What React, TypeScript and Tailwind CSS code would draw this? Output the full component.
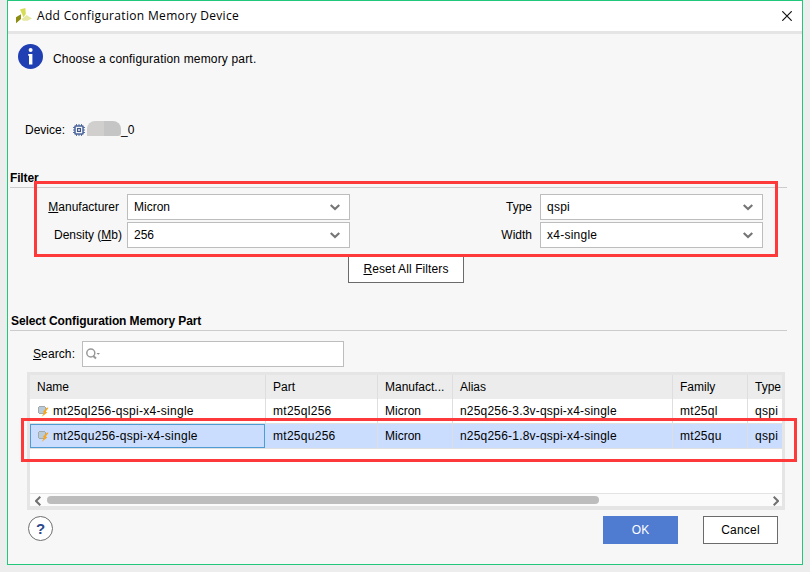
import React from 'react';

interface PartRow {
  name: string;
  part: string;
  alias: string;
  family: string;
  selected: boolean;
}

const ROWS: PartRow[] = [
  { name: 'mt25ql256-qspi-x4-single', part: 'mt25ql256', alias: 'n25q256-3.3v-qspi-x4-single', family: 'mt25ql', selected: false },
  { name: 'mt25qu256-qspi-x4-single', part: 'mt25qu256', alias: 'n25q256-1.8v-qspi-x4-single', family: 'mt25qu', selected: true },
];

const COLS = 'grid grid-cols-[236px_112px_75px_220px_75px_34px]';

const Logo = () => (
  <svg className="h-[16px] w-[16px] shrink-0" viewBox="0 0 16 16">
    <path d="M4 1.5 L9.3 0 L9.8 6 L7.5 9.3 L5.8 5.5 Z" fill="#d6dc55" />
    <path d="M0 9.3 L5 6.3 L5 11 L0 15.2 Z" fill="#8c8d12" />
    <path d="M5.5 11 L8 9.3 L10.5 7 L16 10.5 L11.5 12.8 L7 12.8 Z" fill="#e4e8a0" />
  </svg>
);

const ChipIcon = () => (
  <svg className="h-[12px] w-[12px] shrink-0" viewBox="0 0 12 12">
    <path d="M3.5 0v12M6 0v12M8.5 0v12M0 3.5h12M0 6h12M0 8.5h12" stroke="#5a71a0" strokeWidth="1" />
    <rect x="2" y="2" width="8" height="8" rx="0.5" fill="#f2f4f8" stroke="#4a639a" strokeWidth="1.5" />
    <rect x="4.5" y="4.5" width="3" height="3" fill="#c3cbdc" stroke="#3d588f" strokeWidth="1" />
  </svg>
);

const FlashIcon = () => (
  <svg className="h-[12px] w-[12px] shrink-0" viewBox="0 0 12 12">
    <path d="M2 1h6v1h1v6h-1v1h-6v-1h-1v-6h1z" fill="#a5a8ab" />
    <rect x="2" y="2" width="6" height="6" fill="#b7cbd8" />
    <path d="M10 2.5 L5.8 7 L7.2 7.8 L4.5 12 L10.3 7.6 L8.8 6.6 L11.6 2.8 Z" fill="#f7a51c" />
  </svg>
);

const Chevron = () => (
  <svg className="mr-[9px] h-[7px] w-[10px] shrink-0" viewBox="0 0 10 7">
    <path d="M0.7 1 L5 5 L9.3 1" fill="none" stroke="#757575" strokeWidth="2.2" />
  </svg>
);

const Combo = ({ value }: { value: string }) => (
  <div className="flex h-[26px] w-[223px] items-center justify-between border border-[#bdbdbd] bg-white pl-[6px]">
    <span className={value.includes('s') ? 'tracking-[0.25px]' : ''}>{value}</span>
    <Chevron />
  </div>
);

const Cell = ({ children }: { children: React.ReactNode }) => (
  <div className="flex items-center overflow-hidden border-r border-[#dedede] pl-[7px] last:border-r-0">{children}</div>
);

const App: React.FC = () => {
  return (
    <div className="h-[572px] w-[810px] overflow-hidden bg-[#ededed] pl-[7px] font-['Liberation_Sans',Arial,sans-serif] text-[12px] leading-[14px] whitespace-nowrap text-black">
      <div className="relative flex h-[565px] w-[796px] flex-col border border-[#21c77a] bg-[#f7f7f7]">
        {/* Title bar */}
        <header className="flex h-[33px] shrink-0 items-center border-b-3 border-[#e5e5e5] bg-white pr-[10px] pl-[8px]">
          <Logo />
          <h1 className="ml-[5px] font-['Open_Sans','Noto_Sans',sans-serif] text-[12px] tracking-[0.33px]">Add Configuration Memory Device</h1>
          <svg className="ml-auto h-[10px] w-[10px]" viewBox="0 0 10 10">
            <path d="M0.3 0.3 L9.7 9.7 M9.7 0.3 L0.3 9.7" stroke="#111" strokeWidth="1.2" />
          </svg>
        </header>

        <div className="mt-[10px] flex h-[25px] shrink-0 items-center pl-[10px]">
          <svg className="h-[25px] w-[25px]" viewBox="0 0 25 25">
            <circle cx="12.5" cy="12.5" r="12.5" fill="#203fb3" />
            <circle cx="12.6" cy="6" r="2" fill="#fff" />
            <path d="M10.2 10h4.2v10.5h-3.4v-8.8h-0.8z" fill="#fff" />
          </svg>
          <p className="mt-[4px] ml-[10px] tracking-[0.17px]">Choose a configuration memory part.</p>
        </div>

        <div className="mt-[52px] flex h-[18px] shrink-0 items-center pl-[17px]">
          <span>Device:</span>
          <span className="ml-auto flex w-[729px] items-center">
            <ChipIcon />
            <span className="-mt-[3px] ml-[2px] h-[15px] w-[34px] rounded-t-[8px] rounded-br-[3px] bg-linear-to-r from-[#d0cfce] from-50% to-[#c5c5c5] to-50%" />
            <span>_0</span>
          </span>
        </div>

        {/* Filter */}
        <section className="mt-[31px] shrink-0 pl-[2px]">
          <h2 className="h-[18px] w-[777px] border-b border-[#cccccc] pt-px font-bold tracking-[-0.15px]">Filter</h2>
          <div className="mt-[6px] grid grid-cols-[117px_223px_190px_223px] gap-y-[2px]">
            <label className="flex items-center justify-end pr-[8px]"><u>M</u>anufacturer</label>
            <Combo value="Micron" />
            <label className="flex items-center justify-end pr-[8px]">Type</label>
            <Combo value="qspi" />
            <label className="flex items-center justify-end pr-[5px]">Density (<u>M</u>b)</label>
            <Combo value="256" />
            <label className="flex items-center justify-end pr-[8px]">Width</label>
            <Combo value="x4-single" />
          </div>
          <button className="mt-[7px] ml-[338px] block h-[28px] w-[116px] border border-[#6b6b6b] bg-white tracking-[0.1px]"><u>R</u>eset All Filters</button>
        </section>

        {/* Part selection */}
        <section className="mt-[31px] shrink-0 pl-[2px]">
          <h2 className="h-[17px] w-[777px] border-b border-[#cccccc] pl-[1px] font-bold tracking-[-0.1px]">Select Configuration Memory Part</h2>
          <div className="mt-[10px] flex items-center pl-[23px]">
            <label className="w-[49px] tracking-[0.1px]"><u>S</u>earch:</label>
            <div className="flex h-[26px] w-[262px] items-center border border-[#bdbdbd] bg-white pl-[3px]">
              <svg className="h-[12px] w-[15px]" viewBox="0 0 15 12">
                <circle cx="4.8" cy="5" r="4" fill="none" stroke="#999" strokeWidth="1.5" />
                <path d="M7 7.8 L10 10.5" stroke="#999" strokeWidth="2" />
                <path d="M10.5 5h3.5l-1.7 1.8z" fill="#8c8c8c" />
              </svg>
            </div>
          </div>

          <div className="mt-[5px] ml-[17px] flex h-[138px] w-[758px] flex-col border-3 border-b-4 border-[#e5e5e5] bg-white">
            <div className={`${COLS} h-[24px] shrink-0 bg-[#ececec]`}>
              <Cell>Name</Cell>
              <Cell>Part</Cell>
              <Cell>Manufact...</Cell>
              <Cell>Alias</Cell>
              <Cell>Family</Cell>
              <Cell>Type</Cell>
            </div>
            {ROWS.map(row => (
              <div key={row.name} className={`${COLS} h-[25px] shrink-0 border-b border-[#e0e0e0] tracking-[0.28px] ${row.selected ? 'bg-[#cbddfe]' : 'bg-white'}`}>
                <div className={`flex items-center ${row.selected ? 'mr-px border border-[#4f9bd3] pl-[6px]' : 'border-r border-[#dedede] pl-[7px]'}`}>
                  <FlashIcon />
                  <span className="ml-[4px]">{row.name}</span>
                </div>
                <Cell>{row.part}</Cell>
                <Cell><span className="tracking-normal">Micron</span></Cell>
                <Cell><span className="tracking-[0.2px]">{row.alias}</span></Cell>
                <Cell>{row.family}</Cell>
                <Cell>qspi</Cell>
              </div>
            ))}
            <div className="mt-auto flex h-[13px] items-start border-t border-[#e3e3e3] bg-[#fbfbfb] pt-[2px] pl-[5px]">
              <svg className="h-[10px] w-[6px]" viewBox="0 0 6 10">
                <path d="M5.3 0.7 L1 5 L5.3 9.3" fill="none" stroke="#707070" strokeWidth="2" />
              </svg>
              <div className="ml-[6px] h-[8px] w-[552px] rounded-full bg-[#bdbdbd]" />
              <svg className="mr-[3px] ml-auto h-[10px] w-[6px]" viewBox="0 0 6 10">
                <path d="M0.7 0.7 L5 5 L0.7 9.3" fill="none" stroke="#707070" strokeWidth="2" />
              </svg>
            </div>
          </div>
        </section>

        <footer className="mt-[6px] flex shrink-0 items-start pr-[24px] pl-[20px]">
          <button className="flex h-[25px] w-[25px] items-center justify-center rounded-full border border-[#707070] bg-white text-[15px] font-bold text-[#2c478a]">?</button>
          <button className="ml-auto h-[28px] w-[75px] bg-[#4f7bd1] text-white">OK</button>
          <button className="ml-[25px] h-[28px] w-[75px] border border-[#6b6b6b] bg-white tracking-[0.2px]">Cancel</button>
        </footer>

        {/* Highlight frames */}
        <div className="absolute top-[180px] left-[26px] h-[76px] w-[744px] border-3 border-[#fd3a39]" />
        <div className="absolute top-[417px] left-[13px] h-[44px] w-[776px] border-3 border-[#fd3a39]" />
      </div>
    </div>
  );
};

export default App;
